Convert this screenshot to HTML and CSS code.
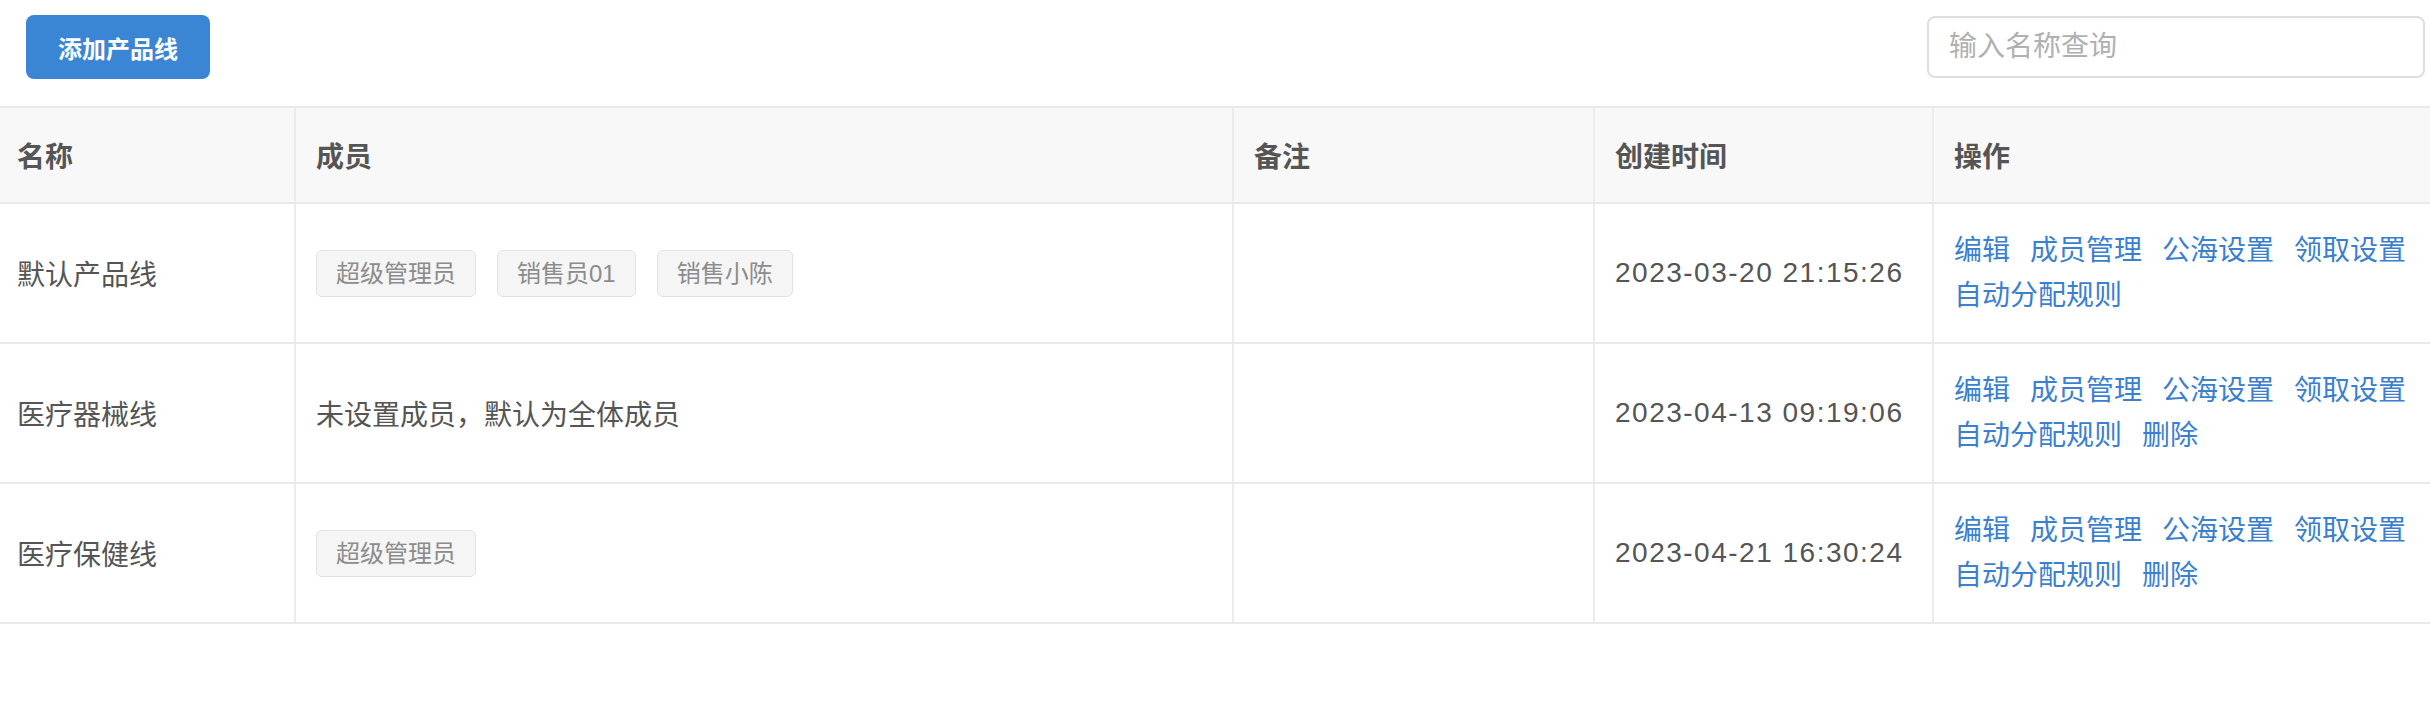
FILE: index.html
```html
<!DOCTYPE html>
<html lang="zh-CN">
<head>
<meta charset="utf-8">
<title>产品线</title>
<link rel="stylesheet" href="styles.css">
</head>
<body>
<div class="toolbar">
  <button class="btn-primary" type="button">添加产品线</button>
  <input class="search" type="text" placeholder="输入名称查询">
</div>
<table class="grid">
  <colgroup>
    <col class="c-name">
    <col class="c-member">
    <col class="c-note">
    <col class="c-time">
    <col class="c-ops">
  </colgroup>
  <thead>
    <tr>
      <th class="first">名称</th>
      <th>成员</th>
      <th>备注</th>
      <th>创建时间</th>
      <th>操作</th>
    </tr>
  </thead>
  <tbody>
    <tr>
      <td class="first">默认产品线</td>
      <td><span class="tag">超级管理员</span><span class="tag">销售员01</span><span class="tag">销售小陈</span></td>
      <td></td>
      <td class="time">2023-03-20 21:15:26</td>
      <td><div class="ops"><a href="#">编辑</a><a href="#">成员管理</a><a href="#">公海设置</a><a href="#">领取设置</a><a href="#">自动分配规则</a></div></td>
    </tr>
    <tr>
      <td class="first">医疗器械线</td>
      <td>未设置成员，默认为全体成员</td>
      <td></td>
      <td class="time">2023-04-13 09:19:06</td>
      <td><div class="ops"><a href="#">编辑</a><a href="#">成员管理</a><a href="#">公海设置</a><a href="#">领取设置</a><a href="#">自动分配规则</a><a href="#">删除</a></div></td>
    </tr>
    <tr>
      <td class="first">医疗保健线</td>
      <td><span class="tag">超级管理员</span></td>
      <td></td>
      <td class="time">2023-04-21 16:30:24</td>
      <td><div class="ops"><a href="#">编辑</a><a href="#">成员管理</a><a href="#">公海设置</a><a href="#">领取设置</a><a href="#">自动分配规则</a><a href="#">删除</a></div></td>
    </tr>
  </tbody>
</table>
</body>
</html>
```
FILE: styles.css
```css
* { box-sizing: border-box; }
html, body { margin: 0; padding: 0; background: #fff; }
body {
  font-family: "Liberation Sans", "Noto Sans CJK SC", sans-serif;
  font-size: 28px;
  color: #555;
}
.toolbar {
  height: 106px;
  display: flex;
  justify-content: space-between;
  align-items: flex-start;
  padding: 15px 5px 0 26px;
}
.btn-primary {
  width: 184px;
  height: 64px;
  border: none;
  border-radius: 8px;
  background: #3a86d5;
  color: #fff;
  font-family: "Liberation Sans", "Noto Sans CJK SC", sans-serif;
  font-size: 24px;
  font-weight: bold;
  padding: 0;
}
.search {
  width: 498px;
  height: 62px;
  margin-top: 1px;
  border: 2px solid #dedede;
  border-radius: 8px;
  padding: 0 20px;
  font-family: "Liberation Sans", "Noto Sans CJK SC", sans-serif;
  font-size: 28px;
  color: #555;
  outline: none;
}
.search::placeholder { color: #b0b0b0; }
.grid {
  width: 100%;
  border-collapse: collapse;
  table-layout: fixed;
}
.c-name { width: 295px; }
.c-member { width: 938px; }
.c-note { width: 361px; }
.c-time { width: 339px; }
.c-ops { width: 497px; }
.grid th, .grid td {
  border-top: 2px solid #e9e9e9;
  border-bottom: 2px solid #e9e9e9;
  border-left: 2px solid #ececec;
  padding: 0 20px;
  text-align: left;
  vertical-align: middle;
}
.grid th.first, .grid td.first { border-left: none; padding-left: 17px; }
.grid thead tr { height: 96px; }
.grid th {
  background: #f8f8f8;
  font-weight: bold;
  color: #555;
}
.grid tbody tr { height: 140px; }
.grid td { color: #555; }
.time { letter-spacing: 1.5px; white-space: nowrap; }
.tag {
  display: inline-block;
  font-size: 24px;
  line-height: 37px;
  padding: 4px 19px;
  border: 1px solid #e2e2e2;
  border-radius: 6px;
  background: #f5f5f5;
  color: #8c8c8c;
  margin-right: 21px;
}
.ops {
  display: flex;
  flex-wrap: wrap;
  column-gap: 20px;
  line-height: 45px;
}
.ops a {
  color: #3a7fd0;
  text-decoration: none;
}
```
